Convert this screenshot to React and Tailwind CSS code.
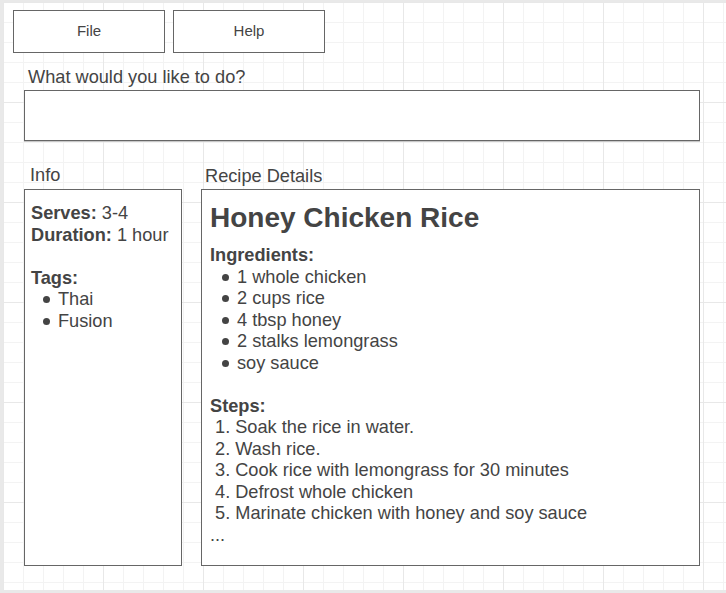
import React from 'react';

const ingredients = ['1 whole chicken', '2 cups rice', '4 tbsp honey', '2 stalks lemongrass', 'soy sauce'];
const steps = [
  'Soak the rice in water.',
  'Wash rice.',
  'Cook rice with lemongrass for 30 minutes',
  'Defrost whole chicken',
  'Marinate chicken with honey and soy sauce',
];

function Bullet({ children }) {
  return (
    <div className="flex items-center">
      <span className="ml-[12px] mr-[8px] h-[7px] w-[7px] rounded-full bg-[#444]" />
      <span>{children}</span>
    </div>
  );
}

export default function App() {
  return (
    <div
      className="w-[726px] h-[593px] overflow-hidden bg-[#e9e9e9] pl-[3px] pt-[2px] pb-[3px] text-[#444]"
      style={{ fontFamily: '"Liberation Sans", Arial, sans-serif' }}
    >
      <div className="h-full flex flex-col bg-white [background-image:linear-gradient(to_right,#e8e8e8_1px,transparent_1px),linear-gradient(to_bottom,#e8e8e8_1px,transparent_1px),linear-gradient(to_right,#f3f3f3_1px,transparent_1px),linear-gradient(to_bottom,#f3f3f3_1px,transparent_1px)] [background-size:100px_100px,100px_100px,20px_20px,20px_20px]">
        <div className="mt-[8px] ml-[10px] flex gap-[8px]">
          <button className="w-[152px] h-[43px] border border-[#666] bg-white text-[15px]">File</button>
          <button className="w-[152px] h-[43px] border border-[#666] bg-white text-[15px]">Help</button>
        </div>

        <div className="mt-[14px] ml-[25px] text-[18.2px] leading-[21.6px]">What would you like to do?</div>
        <div className="mt-[1px] ml-[21px] w-[676px] h-[51px] border border-[#666] bg-white shadow-[0_1px_0_#c8c8c8]" />

        <div className="mt-[24px] ml-[21px] flex gap-[19px]">
          <div className="w-[158px] flex flex-col">
            <div className="pl-[6px] text-[18.2px] leading-[21.6px]">Info</div>
            <div className="mt-[3px] h-[377px] border border-[#666] bg-white pl-[6px] pt-[13px] text-[18.2px] leading-[21.5px]">
              <div>
                <b>Serves:</b> 3-4
              </div>
              <div>
                <b>Duration:</b> 1 hour
              </div>
              <div className="h-[21.5px]" />
              <div className="font-bold">Tags:</div>
              <Bullet>Thai</Bullet>
              <Bullet>Fusion</Bullet>
            </div>
          </div>

          <div className="w-[499px] flex flex-col">
            <div className="pl-[4px] pt-[1px] text-[18.2px] leading-[21.6px]">Recipe Details</div>
            <div className="mt-[2px] h-[377px] border border-[#666] bg-white pl-[8px] pt-[11px] text-[18.2px] leading-[21.5px]">
              <div className="text-[28px] leading-[34px] font-bold mb-[10px]">Honey Chicken Rice</div>
              <div className="font-bold">Ingredients:</div>
              {ingredients.map((x) => (
                <Bullet key={x}>{x}</Bullet>
              ))}
              <div className="h-[21.5px]" />
              <div className="font-bold">Steps:</div>
              {steps.map((s, i) => (
                <div key={i} className="pl-[5px]">
                  {i + 1}. {s}
                </div>
              ))}
              <div>...</div>
            </div>
          </div>
        </div>
      </div>
    </div>
  );
}
